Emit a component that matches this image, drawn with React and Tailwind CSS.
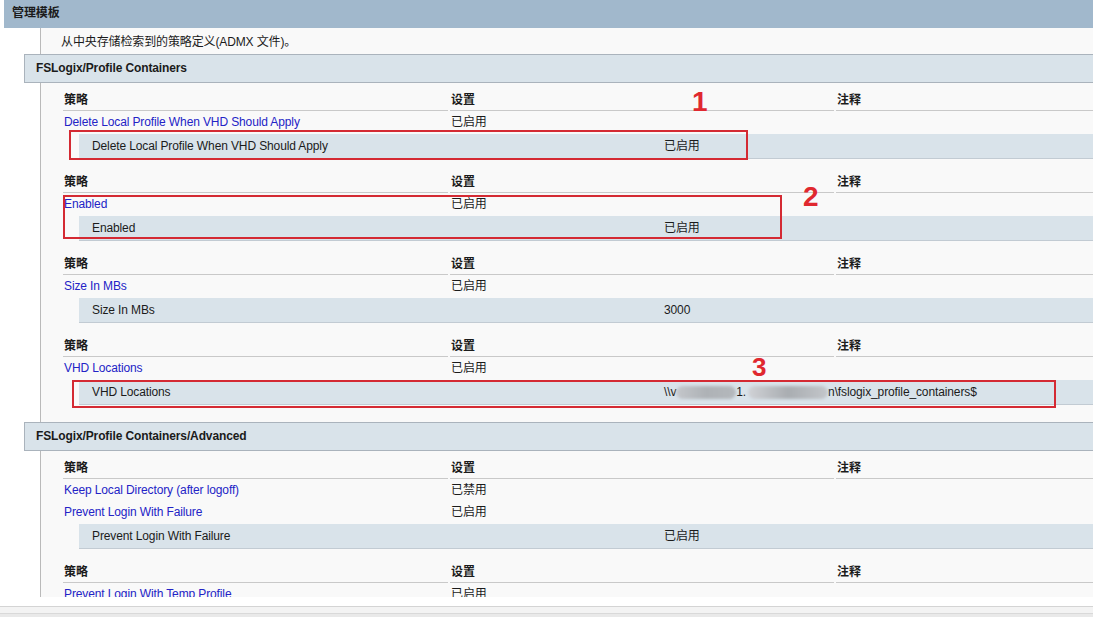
import React from "react";

const VhdValue = () => (
  <div className="flex items-center">
    <span>{"\\\\v"}</span>
    <span className="h-[13px] w-[60px] rounded-full bg-gradient-to-r from-[#c4c7cb] via-[#aeb2b6] to-[#b4b8bc] blur-[1.5px]" />
    <span>1.</span>
    <span className="ml-[2px] h-[13px] w-[80px] rounded-full bg-gradient-to-r from-[#d0d2d6] via-[#a9adb1] to-[#c3c6ca] blur-[1.5px]" />
    <span>{"n\\fslogix_profile_containers$"}</span>
  </div>
);

const sections = [
  {
    title: "FSLogix/Profile Containers",
    groups: [
      {
        rows: [{ name: "Delete Local Profile When VHD Should Apply", value: "已启用" }],
        details: [{ name: "Delete Local Profile When VHD Should Apply", value: "已启用" }],
      },
      {
        rows: [{ name: "Enabled", value: "已启用" }],
        details: [{ name: "Enabled", value: "已启用" }],
      },
      {
        rows: [{ name: "Size In MBs", value: "已启用" }],
        details: [{ name: "Size In MBs", value: "3000" }],
      },
      {
        rows: [{ name: "VHD Locations", value: "已启用" }],
        details: [{ name: "VHD Locations", value: <VhdValue /> }],
      },
    ],
  },
  {
    title: "FSLogix/Profile Containers/Advanced",
    groups: [
      {
        rows: [
          { name: "Keep Local Directory (after logoff)", value: "已禁用" },
          { name: "Prevent Login With Failure", value: "已启用" },
        ],
        details: [{ name: "Prevent Login With Failure", value: "已启用" }],
      },
      {
        rows: [{ name: "Prevent Login With Temp Profile", value: "已启用" }],
        details: [{ name: "Prevent Login With Temp Profile", value: "已启用" }],
      },
    ],
  },
];

const PolicyGroup = ({ group }) => (
  <div>
    {/* column headers */}
    <div className="flex h-[22px] font-bold">
      <div className="w-[385px] border-b border-[#c9c9c9] pl-[1px] flex items-center">策略</div>
      <div className="ml-[2px] w-[384px] border-b border-[#c9c9c9] pl-[1px] flex items-center">设置</div>
      <div className="ml-[2px] flex-1 border-b border-[#c9c9c9] pl-[1px] flex items-center">注释</div>
    </div>
    {group.rows.map((row, i) => (
      <div key={i} className="flex h-[22px] items-center">
        <div className="w-[385px] pl-[1px] text-[#2323c6]">{row.name}</div>
        <div className="ml-[2px] w-[384px] pl-[1px]">{row.value}</div>
      </div>
    ))}
    {group.details.map((d, i) => (
      <div key={i} className="mt-[1px] ml-[16px] h-[25px] bg-[#d9e3ea] border-b border-[#c2cbd3] flex items-center">
        <div className="w-[585px] pl-[13px]">{d.name}</div>
        <div>{d.value}</div>
      </div>
    ))}
  </div>
);

const App = () => {
  return (
    <div className="relative w-[1093px] h-[617px] overflow-hidden bg-white text-[12px] tracking-[-0.12px] text-[#1b1b1b] font-['Liberation_Sans','Noto_Sans_CJK_SC',sans-serif]">
      <div className="h-[597px] overflow-hidden">
        {/* Title bar */}
        <div className="ml-[4px] h-[28px] bg-[#a1b8cc] pl-[8px] pb-[2px] flex items-center font-bold">管理模板</div>

        <div className="ml-[40px] border-l border-[#bababa] bg-[#f9f9f9] pb-10">
          <div className="h-[26px] pl-[20px] pt-[2px] flex items-center">从中央存储检索到的策略定义(ADMX 文件)。</div>

          {sections.map((section, idx) => (
            <div key={idx} className={idx > 0 ? "mt-[17px]" : ""}>
              <div className="-ml-[17px] h-[29px] bg-[#d9e3ea] border-y border-l border-[#aab3bc] pl-[11px] pb-[2px] flex items-center font-bold">
                {section.title}
              </div>
              <div className="pl-[22px] pt-[6px] flex flex-col gap-[12px]">
                {section.groups.map((group, gi) => (
                  <PolicyGroup key={gi} group={group} />
                ))}
              </div>
            </div>
          ))}
        </div>
      </div>

      {/* bottom scroll strip */}
      <div className="h-[9px] bg-white" />
      <div className="h-[7px] border-t border-[#d4d4d4] bg-[#f3f3f3]" />
      <div className="h-[4px] border-t border-[#d9d9d9] bg-[#e9e9e9]" />

      {/* Annotations */}
      <div className="absolute left-[69px] top-[130px] w-[679px] h-[30px] border-2 border-[#d42a33]" />
      <div className="absolute left-[63px] top-[195px] w-[719px] h-[44px] border-2 border-[#d42a33]" />
      <div className="absolute left-[72px] top-[380px] w-[984px] h-[28px] border-2 border-[#d42a33]" />
      <div className="absolute left-[692px] top-[88px] text-[28px] leading-none font-bold text-[#e0282f]">1</div>
      <div className="absolute left-[803px] top-[183px] text-[28px] leading-none font-bold text-[#e0282f]">2</div>
      <div className="absolute left-[752px] top-[354px] text-[26px] leading-none font-bold text-[#e0282f]">3</div>
    </div>
  );
};

export default App;
